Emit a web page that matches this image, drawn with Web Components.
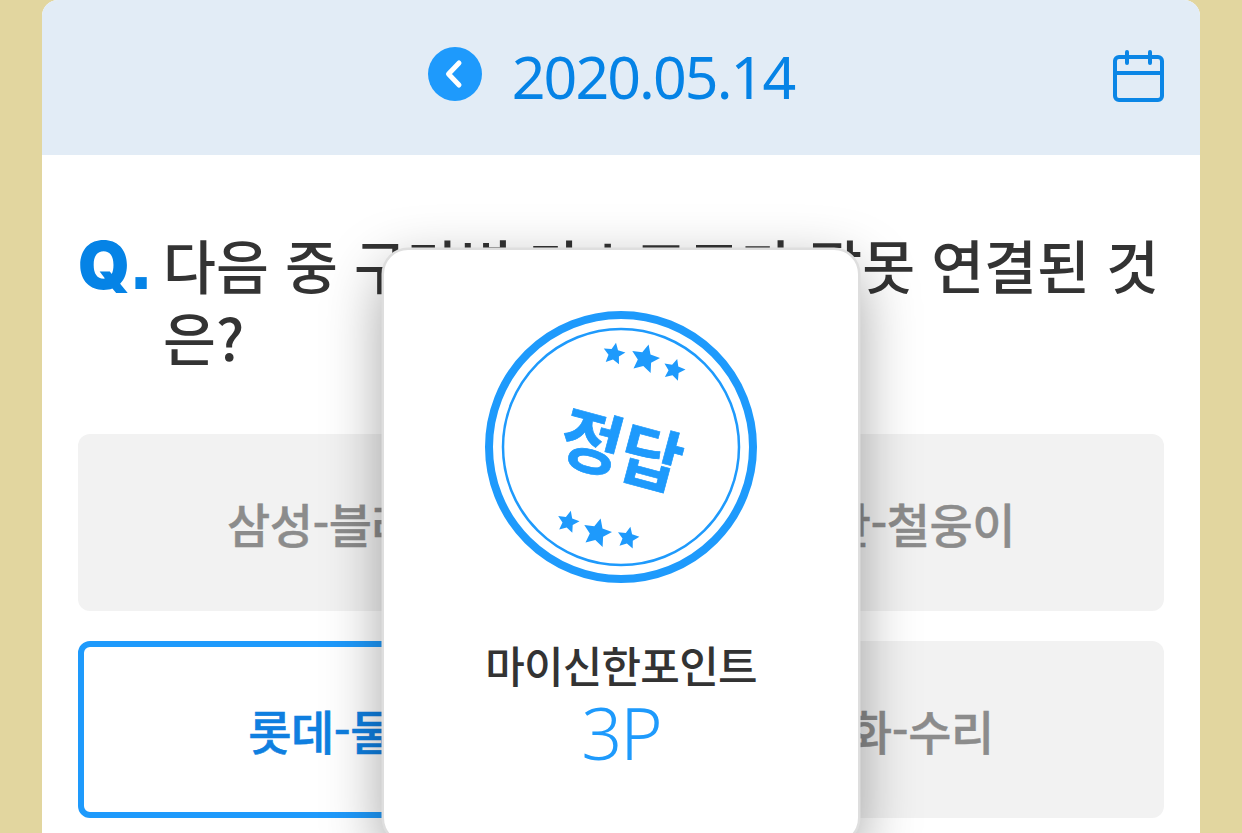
<!DOCTYPE html>
<html lang="ko">
<head>
<meta charset="utf-8">
<title>퀴즈</title>
<style>
  html, body { margin: 0; height: 100%; overflow: hidden; }
  body {
    background: #e2d69f;
    font-family: "Noto Sans CJK KR", "Noto Sans", sans-serif;
    height: 833px;
  }
</style>
</head>
<body>
<quiz-page>
  <date-bar slot="bar" date="2020.05.14"></date-bar>
  <quiz-question>다음 중 구단별 마스코트가 잘못 연결된 것은?</quiz-question>
  <quiz-answers>
    <quiz-option>삼성-블레오</quiz-option>
    <quiz-option>두산-철웅이</quiz-option>
    <quiz-option selected>롯데-둘리</quiz-option>
    <quiz-option>한화-수리</quiz-option>
  </quiz-answers>
  <result-popup slot="popup" label="마이신한포인트" points="3P"></result-popup>
</quiz-page>

<script>
class QuizPage extends HTMLElement {
    constructor() {
        super();
        this.attachShadow({ mode: 'open' });
        this.shadowRoot.innerHTML = `
            <style>
                :host { display: block; position: relative; height: 833px; padding: 0 42px; overflow: hidden; }
                .card { background: #fff; border-radius: 16px 16px 0 0; height: 100%; }
                .body { padding: 72px 36px 0; }
            </style>
            <div class="card">
                <slot name="bar"></slot>
                <div class="body"><slot></slot></div>
            </div>
            <slot name="popup"></slot>
        `;
    }
}

class DateBar extends HTMLElement {
    constructor() {
        super();
        this.attachShadow({ mode: 'open' });
    }

    connectedCallback() {
        this.shadowRoot.innerHTML = `
            <style>
                :host { display: flex; align-items: center; justify-content: center; position: relative; box-sizing: border-box; height: 155px; padding: 0 20px 7px 0; background: #e2ecf6; border-radius: 16px 16px 0 0; }
                .back { width: 54px; height: 54px; margin-right: 30px; display: block; }
                .date { font: 400 59px/1 "Noto Sans", sans-serif; color: #0583e6; letter-spacing: -1.9px; margin-top: 4px; }
                .cal { position: absolute; right: 36px; top: 50px; width: 52px; height: 52px; }
            </style>
            <svg class="back" viewBox="0 0 54 54">
                <circle cx="27" cy="27" r="27" fill="#1e9afc"/>
                <path d="M31 16 20.5 27 31 38" fill="none" stroke="#fff" stroke-width="5" stroke-linejoin="round" stroke-linecap="round"/>
            </svg>
            <span class="date">${this.getAttribute('date')}</span>
            <svg class="cal" viewBox="0 0 52 52" fill="none" stroke="#0b86e6" stroke-width="4">
                <rect x="3" y="7" width="47" height="43" rx="4"/>
                <path d="M3 23h47"/>
                <path d="M15 2v11M38 2v11" stroke-linecap="round"/>
            </svg>
        `;
    }
}

class QuizQuestion extends HTMLElement {
    constructor() {
        super();
        this.attachShadow({ mode: 'open' });
        this.shadowRoot.innerHTML = `
            <style>
                :host { display: flex; color: #333; height: 207px; }
                .q { flex: none; width: 85px; height: 70px; font: 900 66px/66px Inter, sans-serif; color: #0583e6; letter-spacing: -1px; margin-top: 5px; }
                .q span { font: 700 80px/0 "Liberation Sans", sans-serif; margin-left: 1px; }
                .text { font-size: 57.5px; font-weight: 500; line-height: 72px; margin-top: 1px; }
            </style>
            <div class="q">Q<span>.</span></div>
            <div class="text"><slot></slot></div>
        `;
    }
}

class QuizAnswers extends HTMLElement {
    constructor() {
        super();
        this.attachShadow({ mode: 'open' });
        this.shadowRoot.innerHTML = `
            <style>
                :host { display: grid; grid-template-columns: 1fr 1fr; gap: 30px; }
            </style>
            <slot></slot>
        `;
    }
}

class QuizOption extends HTMLElement {
    constructor() {
        super();
        this.attachShadow({ mode: 'open' });
        this.shadowRoot.innerHTML = `
            <style>
                :host { display: flex; align-items: center; justify-content: center; box-sizing: border-box; height: 177px; border-radius: 12px; background: #f2f2f2; color: #8c8c8c; font-size: 47px; font-weight: 500; letter-spacing: -0.5px; -webkit-text-stroke: .4px currentColor; }
                :host([selected]) { background: #fff; border: 6px solid #1e9afc; color: #0f7fe0; -webkit-text-stroke: .6px currentColor; }
            </style>
            <slot></slot>
        `;
    }
}

class ResultPopup extends HTMLElement {
    constructor() {
        super();
        this.attachShadow({ mode: 'open' });
    }

    connectedCallback() {
        this.shadowRoot.innerHTML = `
            <style>
                :host { position: absolute; left: 384px; top: 250px; width: 474px; height: 592px; box-sizing: border-box; background: #fff; border-radius: 24px; box-shadow: 0 0 0 2.5px #dedede, 0 20px 60px rgba(0,0,0,.38); display: flex; flex-direction: column; align-items: center; padding-top: 61px; }
                svg { width: 272px; height: 272px; display: block; }
                .label { margin-top: 51px; font-size: 43px; line-height: 60px; font-weight: 500; color: #333; letter-spacing: -0.8px; white-space: nowrap; }
                .points { font: 300 72px/72px "Noto Sans", sans-serif; color: #1e9afc; letter-spacing: -2px; margin-top: 2px; }
            </style>
            <svg viewBox="0 0 272 272">
                <circle cx="136" cy="136" r="132" fill="none" stroke="#1e9afc" stroke-width="8"/>
                <circle cx="136" cy="136" r="118" fill="none" stroke="#1e9afc" stroke-width="2.5"/>
                <text x="137" y="135" transform="rotate(15 137 135)" text-anchor="middle" dominant-baseline="central" font-size="68" font-weight="700" fill="#1e9afc" stroke="#1e9afc" stroke-width=".7" letter-spacing="-1" font-family="Noto Sans CJK KR">정답</text>
                <g fill="#1e9afc">
                    ${this.star(129, 43, 11.5, 10)}
                    ${this.star(160, 48, 15, 14)}
                    ${this.star(189, 59, 11.5, 16)}
                    ${this.star(83, 211, 11.5, 14)}
                    ${this.star(112, 222, 15, 14)}
                    ${this.star(143, 227, 11.5, 12)}
                </g>
            </svg>
            <div class="label">${this.getAttribute('label')}</div>
            <div class="points">${this.getAttribute('points')}</div>
        `;
    }

    star(cx, cy, r, rot) {
        let pts = [];
        for (let i = 0; i < 10; i++) {
            const rad = i % 2 ? r * 0.48 : r;
            const a = (rot - 90 + i * 36) * Math.PI / 180;
            pts.push((cx + rad * Math.cos(a)).toFixed(1) + ',' + (cy + rad * Math.sin(a)).toFixed(1));
        }
        return `<polygon points="${pts.join(' ')}"/>`;
    }
}

customElements.define('quiz-page', QuizPage);
customElements.define('date-bar', DateBar);
customElements.define('quiz-question', QuizQuestion);
customElements.define('quiz-answers', QuizAnswers);
customElements.define('quiz-option', QuizOption);
customElements.define('result-popup', ResultPopup);
</script>
</body>
</html>
